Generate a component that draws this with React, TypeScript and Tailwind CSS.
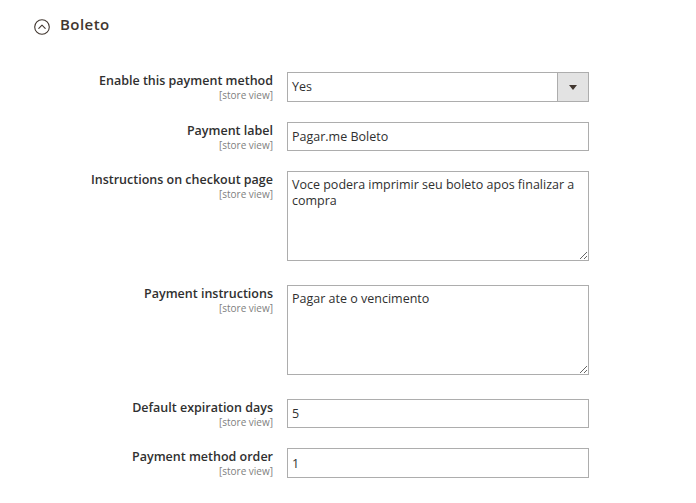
import React from 'react'

const font = { fontFamily: '"Open Sans", "Liberation Sans", sans-serif' }

function FieldLabel({ title }: { title: string }) {
  return (
    <div className="w-[213px] shrink-0 pt-[1px] text-right">
      <div className="text-[12.5px] leading-[15px] font-semibold text-[#303030]">{title}</div>
      <div className="mt-[1px] text-[10px] leading-[12px] text-[#808080]">[store view]</div>
    </div>
  )
}

function Row({ title, children, className = '' }: { title: string; children: React.ReactNode; className?: string }) {
  return (
    <div className={`flex gap-[14px] ${className}`}>
      <FieldLabel title={title} />
      <div className="w-[302px]">{children}</div>
    </div>
  )
}

function TextInput({ value, h = 'h-[29px]' }: { value: string; h?: string }) {
  return (
    <input
      readOnly
      defaultValue={value}
      className={`block w-full ${h} border border-[#adadad] bg-white px-[4px] text-[12.5px] text-[#303030] outline-none`}
      style={font}
    />
  )
}

function TextArea({ value }: { value: string }) {
  return (
    <textarea
      readOnly
      defaultValue={value}
      className="block h-[90px] w-full resize-y border border-[#adadad] bg-white px-[4px] pt-[5px] text-[12.5px] leading-[16px] text-[#303030] outline-none"
      style={font}
    />
  )
}

export default function App() {
  return (
    <div className="min-h-[503px] w-[696px] bg-white" style={font}>
      {/* Section header */}
      <div className="flex items-start gap-[10px] pl-[34px] pt-[19px]">
        <svg width="16" height="16" viewBox="0 0 16 16" fill="none">
          <circle cx="8" cy="8" r="7.3" stroke="#41362f" strokeWidth="1.1" />
          <path d="M4.8 9.4 L8 6.2 L11.2 9.4" stroke="#41362f" strokeWidth="1.1" strokeLinecap="round" strokeLinejoin="round" />
        </svg>
        <span className="-mt-[3px] text-[15px] leading-[16px] font-semibold tracking-[0.03em] text-[#41362f]">Boleto</span>
      </div>

      {/* Fields */}
      <div className="pl-[60px] pt-[37px]">
        <Row title="Enable this payment method">
          <div className="flex h-[30px] border border-[#adadad] bg-white">
            <div className="flex flex-1 items-center px-[4px] pt-[1px] text-[12.5px] text-[#303030]">Yes</div>
            <div className="flex w-[31px] items-center justify-center border-l border-[#adadad] bg-[#e3e3e3]">
              <svg width="8" height="5" viewBox="0 0 8 5">
                <path d="M0 0 L8 0 L4 5 Z" fill="#41362f" />
              </svg>
            </div>
          </div>
        </Row>

        <Row title="Payment label" className="mt-[20px]">
          <TextInput value="Pagar.me Boleto" />
        </Row>

        <Row title="Instructions on checkout page" className="mt-[20px]">
          <TextArea value="Voce podera imprimir seu boleto apos finalizar a compra" />
        </Row>

        <Row title="Payment instructions" className="mt-[24px]">
          <TextArea value="Pagar ate o vencimento" />
        </Row>

        <Row title="Default expiration days" className="mt-[24px]">
          <TextInput value="5" />
        </Row>

        <Row title="Payment method order" className="mt-[20px]">
          <TextInput value="1" h="h-[30px]" />
        </Row>
      </div>
    </div>
  )
}
